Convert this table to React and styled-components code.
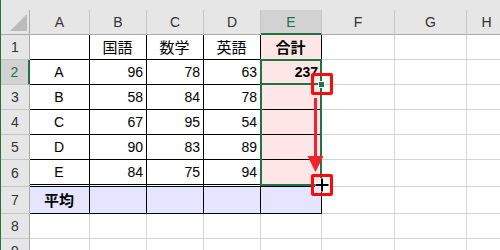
import React from 'react';
import styled, { createGlobalStyle } from 'styled-components';

const GREEN = '#217346';
const GRID = '#d4d4d4';
const HEAD_LINE = '#c6c6c6';

const GlobalStyle = createGlobalStyle`
  html, body {
    margin: 0;
    background: #fff;
  }
  body {
    font-family: "Liberation Sans", "Noto Sans CJK JP", sans-serif;
  }
`;

// column letters and widths (each width includes the right gridline)
const columns = [
    { key: 'A', width: 60 },
    { key: 'B', width: 57 },
    { key: 'C', width: 57 },
    { key: 'D', width: 57 },
    { key: 'E', width: 61 },
    { key: 'F', width: 73 },
    { key: 'G', width: 72 },
    { key: 'H', width: 40 },
];

// rows 1..9, row 6 carries a double bottom border
const rowHeights = [25, 25, 25, 25, 25, 27, 27, 25, 25];

const table = [
    ['', '国語', '数学', '英語', '合計'],
    ['A', 96, 78, 63, 237],
    ['B', 58, 84, 78, ''],
    ['C', 67, 95, 54, ''],
    ['D', 90, 83, 89, ''],
    ['E', 84, 75, 94, ''],
    ['平均', '', '', '', ''],
];

const App = () => {
    const cells = [];

    cells.push(
        <Corner key="corner">
            <Triangle />
        </Corner>
    );
    columns.forEach((col) => {
        cells.push(
            <ColHead key={col.key} $active={col.key === 'E'}>{col.key}</ColHead>
        );
    });

    rowHeights.forEach((h, r) => {
        const rowNo = r + 1;
        cells.push(
            <RowHead key={`h${rowNo}`} $active={rowNo === 2}>{rowNo}</RowHead>
        );
        columns.forEach((col, c) => {
            const inTable = rowNo <= 7 && c <= 4;
            const value = inTable ? table[r][c] : '';
            let bg = '#fff';
            if (c === 4 && rowNo <= 6) bg = '#ffe6e6';
            if (rowNo === 7 && c <= 4) bg = '#e5e5ff';
            const isText = typeof value === 'string';
            cells.push(
                <Cell
                    key={`${col.key}${rowNo}`}
                    $line={inTable ? '#000' : GRID}
                    $double={inTable && rowNo === 6}
                    $bg={bg}
                    $align={c === 0 || rowNo === 1 ? 'center' : 'flex-end'}
                    $bold={(c === 4 && rowNo <= 2) || (c === 0 && rowNo === 7)}
                    $jp={isText && /[^\x00-\x7f]/.test(value)}
                >
                    {value}
                </Cell>
            );
        });
    });

    return (
        <>
            <GlobalStyle />
            <Sheet>
                <TopStrip />
                <Grid
                    $cols={`29px ${columns.map((c) => c.width + 'px').join(' ')}`}
                    $rows={`25px ${rowHeights.map((h) => h + 'px').join(' ')}`}
                >
                    {cells}
                </Grid>

                {/* range E2:E6 being filled */}
                <Selection />
                <ActiveEdge />
                <FillHandle />

                {/* annotation: drag the handle down */}
                <Mark $top={73} />
                <Arrow width="18" height="78" viewBox="0 0 18 78">
                    <rect x="8" y="2" width="3" height="60" fill="#ee2430" />
                    <polygon points="1.5,60 17.5,60 9.5,76" fill="#ee2430" />
                </Arrow>
                <Mark $top={174} />
                <Cursor width="16" height="16" viewBox="0 0 16 16">
                    <path d="M8 1v14M1 8h14" stroke="#fff" strokeWidth="4" />
                    <path d="M8 1.5v13M1.5 8h13" stroke="#000" strokeWidth="2" />
                </Cursor>
            </Sheet>
        </>
    );
};

const Sheet = styled.div`
    position: relative;
    width: 499px;
    height: 250px;
    overflow: hidden;
    border-left: 1px solid ${GREEN};
    background: #fff;
`;

const TopStrip = styled.div`
    height: 10px;
    background: #e6e6e6;
`;

const Grid = styled.div`
    display: grid;
    grid-template-columns: ${(p) => p.$cols};
    grid-template-rows: ${(p) => p.$rows};
`;

const Corner = styled.div`
    box-sizing: border-box;
    display: flex;
    align-items: flex-end;
    justify-content: flex-end;
    padding: 0 2px 3px 0;
    background: #e6e6e6;
    border-right: 1px solid #ababab;
    border-bottom: 1px solid #ababab;
`;

const Triangle = styled.div`
    width: 0;
    height: 0;
    border-left: 17px solid transparent;
    border-bottom: 17px solid #bcbcbc;
`;

const ColHead = styled.div`
    box-sizing: border-box;
    display: flex;
    align-items: center;
    justify-content: center;
    font-size: 14px;
    line-height: 1;
    color: ${(p) => (p.$active ? GREEN : '#333')};
    background: ${(p) => (p.$active ? '#d2d2d2' : '#e6e6e6')};
    border-right: 1px solid ${HEAD_LINE};
    border-bottom: ${(p) => (p.$active ? `2px solid ${GREEN}` : '1px solid #ababab')};
    padding-top: ${(p) => (p.$active ? '1px' : '0')};
`;

const RowHead = styled.div`
    box-sizing: border-box;
    display: flex;
    align-items: center;
    justify-content: center;
    font-size: 14px;
    line-height: 1;
    color: ${(p) => (p.$active ? GREEN : '#333')};
    background: ${(p) => (p.$active ? '#d2d2d2' : '#e6e6e6')};
    border-right: ${(p) => (p.$active ? `2px solid ${GREEN}` : '1px solid #ababab')};
    border-bottom: 1px solid ${HEAD_LINE};
`;

const Cell = styled.div`
    box-sizing: border-box;
    display: flex;
    align-items: center;
    justify-content: ${(p) => p.$align};
    padding: 0 3px 0 2px;
    font-size: ${(p) => (p.$jp ? '15px' : '14px')};
    font-weight: ${(p) => (p.$bold ? 700 : 400)};
    line-height: 1;
    color: #000;
    background: ${(p) => p.$bg};
    border-right: 1px solid ${(p) => p.$line};
    border-bottom: ${(p) => (p.$double ? '3px double #000' : `1px solid ${p.$line}`)};
`;

const Selection = styled.div`
    position: absolute;
    left: 259px;
    top: 59px;
    width: 62px;
    height: 127px;
    box-sizing: border-box;
    border: 2px solid ${GREEN};
    pointer-events: none;
`;

const ActiveEdge = styled.div`
    position: absolute;
    left: 259px;
    top: 83px;
    width: 62px;
    height: 2px;
    background: ${GREEN};
`;

const FillHandle = styled.div`
    position: absolute;
    left: 317px;
    top: 81px;
    width: 5px;
    height: 5px;
    background: ${GREEN};
    border: 1px solid #fff;
`;

const Mark = styled.div`
    position: absolute;
    left: 310px;
    top: ${(p) => p.$top}px;
    width: 22px;
    height: 22px;
    box-sizing: border-box;
    border: 3px solid #ff0a0a;
    border-radius: 2px;
`;

const Arrow = styled.svg`
    position: absolute;
    left: 305px;
    top: 96px;
`;

const Cursor = styled.svg`
    position: absolute;
    left: 313px;
    top: 177px;
`;

export default App;
